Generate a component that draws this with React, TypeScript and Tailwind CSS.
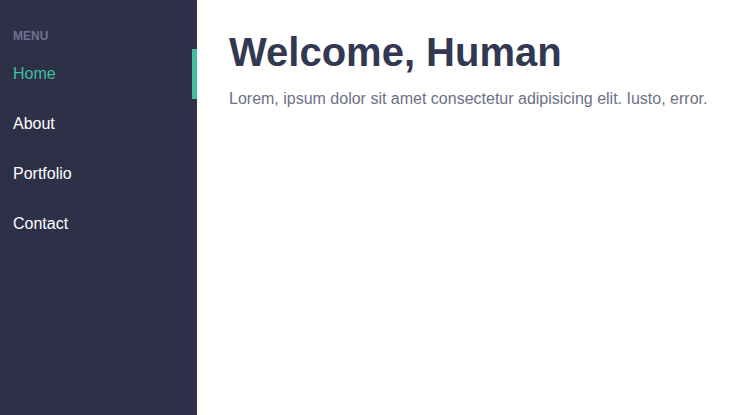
const navItems = ["Home", "About", "Portfolio", "Contact"];

export default function App() {
  const active = "Home";

  return (
    <div className="flex h-[415px] w-full bg-white font-['Liberation_Sans',Arial,sans-serif]">
      <aside className="w-[197px] shrink-0 bg-[#2e3047] pt-[28px]">
        <div className="pl-[13px] text-xs font-bold leading-4 text-[#6e7091]">MENU</div>
        <nav className="mt-[5px]">
          {navItems.map((item) => (
            <a
              key={item}
              href="#"
              className={`flex h-[50px] items-center pl-[13px] text-base ${
                item === active
                  ? "border-r-[5px] border-[#3fbf9c] text-[#3fbf9c]"
                  : "text-white"
              }`}
            >
              {item}
            </a>
          ))}
        </nav>
      </aside>
      <main className="flex-1 pl-8 pt-7">
        <h1 className="text-[40px] font-bold leading-[48px] text-[#333852]">Welcome, Human</h1>
        <p className="mt-[11px] text-base leading-6 text-[#6d7088]">
          Lorem, ipsum dolor sit amet consectetur adipisicing elit. Iusto, error.
        </p>
      </main>
    </div>
  );
}
